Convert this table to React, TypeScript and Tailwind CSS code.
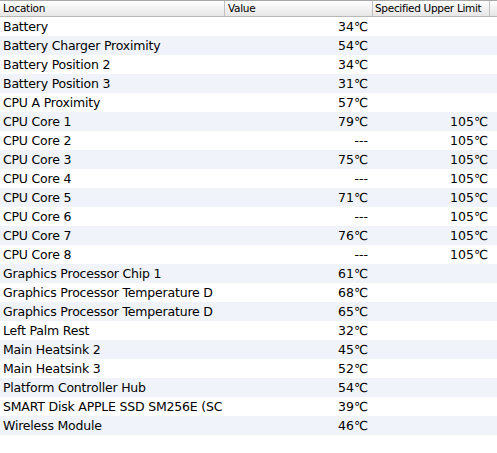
import * as React from 'react'

interface Row {
  location: string
  value: string
  limit?: string
}

const rows: Row[] = [
  { location: 'Battery', value: '34℃' },
  { location: 'Battery Charger Proximity', value: '54℃' },
  { location: 'Battery Position 2', value: '34℃' },
  { location: 'Battery Position 3', value: '31℃' },
  { location: 'CPU A Proximity', value: '57℃' },
  { location: 'CPU Core 1', value: '79℃', limit: '105℃' },
  { location: 'CPU Core 2', value: '---', limit: '105℃' },
  { location: 'CPU Core 3', value: '75℃', limit: '105℃' },
  { location: 'CPU Core 4', value: '---', limit: '105℃' },
  { location: 'CPU Core 5', value: '71℃', limit: '105℃' },
  { location: 'CPU Core 6', value: '---', limit: '105℃' },
  { location: 'CPU Core 7', value: '76℃', limit: '105℃' },
  { location: 'CPU Core 8', value: '---', limit: '105℃' },
  { location: 'Graphics Processor Chip 1', value: '61℃' },
  { location: 'Graphics Processor Temperature D', value: '68℃' },
  { location: 'Graphics Processor Temperature D', value: '65℃' },
  { location: 'Left Palm Rest', value: '32℃' },
  { location: 'Main Heatsink 2', value: '45℃' },
  { location: 'Main Heatsink 3', value: '52℃' },
  { location: 'Platform Controller Hub', value: '54℃' },
  { location: 'SMART Disk APPLE SSD SM256E (SC', value: '39℃' },
  { location: 'Wireless Module', value: '46℃' },
]

const font = { fontFamily: '"DejaVu Sans", "Noto Sans", sans-serif' }

export default function App() {
  return (
    <div className="w-[497px] h-[453px] bg-white text-black overflow-hidden" style={font}>
      {/* Header */}
      <div className="flex h-[17px] border-t border-[#a8a8a8] border-b border-b-[#b8b8b8] bg-gradient-to-b from-[#ffffff] to-[#e6e6e6] text-[10.5px] leading-[15px] tracking-[-0.3px]">
        <div className="w-[225px] shrink-0 pl-[3px] border-r border-[#c0c0c0] whitespace-nowrap overflow-hidden">Location</div>
        <div className="w-[148px] shrink-0 pl-[3px] border-r border-[#c0c0c0] whitespace-nowrap overflow-hidden">Value</div>
        <div className="w-[117px] shrink-0 pl-[2px] border-r border-[#c0c0c0] whitespace-nowrap">Specified Upper Limit</div>
        <div className="flex-1" />
      </div>

      {/* Rows */}
      <div>
        {rows.map((row, i) => (
          <div
            key={i}
            className={`flex h-[19px] items-center pt-[1px] text-[12.5px] ${i % 2 === 1 ? 'bg-[#f0f4fa]' : 'bg-white'}`}
          >
            <div className="w-[225px] shrink-0 pl-[3px] overflow-hidden whitespace-nowrap tracking-[-0.2px]">{row.location}</div>
            <div className="w-[143px] shrink-0 text-right overflow-hidden whitespace-nowrap">{row.value}</div>
            <div className="w-[120px] shrink-0 text-right overflow-hidden whitespace-nowrap">{row.limit ?? ''}</div>
          </div>
        ))}
      </div>
    </div>
  )
}
